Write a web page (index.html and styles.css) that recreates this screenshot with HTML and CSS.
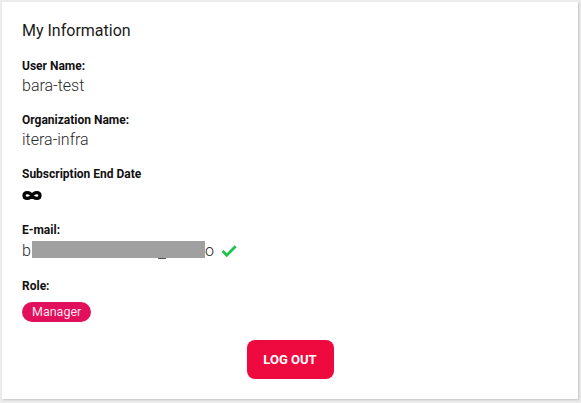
FILE: index.html
```html
<!DOCTYPE html>
<html>
<head>
<meta charset="utf-8">
<link rel="stylesheet" href="styles.css">
</head>
<body>
<div class="card">
  <h2 class="title">My Information</h2>
  <div class="field">
    <div class="label">User Name:</div>
    <div class="value">bara-test</div>
  </div>
  <div class="field">
    <div class="label">Organization Name:</div>
    <div class="value">itera-infra</div>
  </div>
  <div class="field">
    <div class="label">Subscription End Date</div>
    <div class="value tall">
      <svg class="inf" width="20" height="11" viewBox="0 0 20 11"><path d="M10,5.5 C8,1.6 2,1.6 2,5.5 C2,9.4 8,9.4 10,5.5 C12,1.6 18,1.6 18,5.5 C18,9.4 12,9.4 10,5.5Z" fill="none" stroke="#000" stroke-width="3.2"/></svg>
    </div>
  </div>
  <div class="field">
    <div class="label">E-mail:</div>
    <div class="value email tall">
      <span class="etext">b<span class="redact"></span><span class="under"></span>o</span>
      <svg class="check" width="18" height="18" viewBox="0 0 24 24"><path d="M9 16.17L4.83 12l-1.42 1.41L9 19 21 7l-1.41-1.41z" fill="#1ec44f" stroke="#1ec44f" stroke-width="1.8" stroke-linejoin="miter"/></svg>
    </div>
  </div>
  <div class="field role">
    <div class="label">Role:</div>
    <div class="chips"><span class="chip">Manager</span></div>
  </div>
  <div class="actions">
    <button class="logout">LOG OUT</button>
  </div>
</div>
</body>
</html>
```
FILE: styles.css
```css
html, body {
  margin: 0;
  padding: 0;
}
body {
  background: #ececec;
  width: 581px;
  height: 403px;
  padding: 2px 3px 4px 2px;
  box-sizing: border-box;
  font-family: Roboto, "Liberation Sans", sans-serif;
}
.card {
  background: #fff;
  height: 397px;
  box-sizing: border-box;
  padding: 17px 20px 19px 20px;
  box-shadow: 1px 1px 2px rgba(0,0,0,0.18);
  display: flex;
  flex-direction: column;
}
.title {
  margin: 0 0 15px 0;
  font-size: 16px;
  line-height: 24px;
  font-weight: 400;
  color: #1b1b1b;
}
.field {
  margin-bottom: 16px;
  display: flex;
  flex-direction: column;
  gap: 2px;
}
.label {
  font-size: 12px;
  line-height: 16px;
  font-weight: 700;
  color: #111;
}
.value {
  font-size: 16px;
  line-height: 20px;
  font-weight: 300;
  color: #2a2a2a;
  height: 20px;
  display: flex;
  align-items: center;
}
.value.tall {
  height: 22px;
}
.inf {
  display: block;
}
.email {
  gap: 6px;
}
.etext {
  position: relative;
  display: inline-flex;
  align-items: center;
}
.redact {
  display: inline-block;
  width: 173px;
  height: 17px;
  background: #a0a0a0;
  margin: 0 0 0 1px;
  position: relative;
  top: -2px;
}
.under {
  position: absolute;
  left: 136px;
  top: 17px;
  width: 8px;
  height: 1px;
  background: #555;
}
.check {
  display: block;
}
.role {
  gap: 8px;
  margin-bottom: 18px;
}
.chips {
  display: flex;
}
.chip {
  background: #e20f5c;
  color: rgba(255,255,255,0.9);
  font-size: 12.5px;
  line-height: 20px;
  height: 20px;
  padding: 0 10px;
  border-radius: 10px;
  font-weight: 400;
}
.actions {
  display: flex;
  justify-content: center;
}
.logout {
  background: #ee0a3e;
  color: #fff;
  border: none;
  border-radius: 8px;
  width: 87px;
  height: 39px;
  font-family: Roboto, "Liberation Sans", sans-serif;
  font-weight: 700;
  font-size: 13px;
  padding: 0;
}
```
